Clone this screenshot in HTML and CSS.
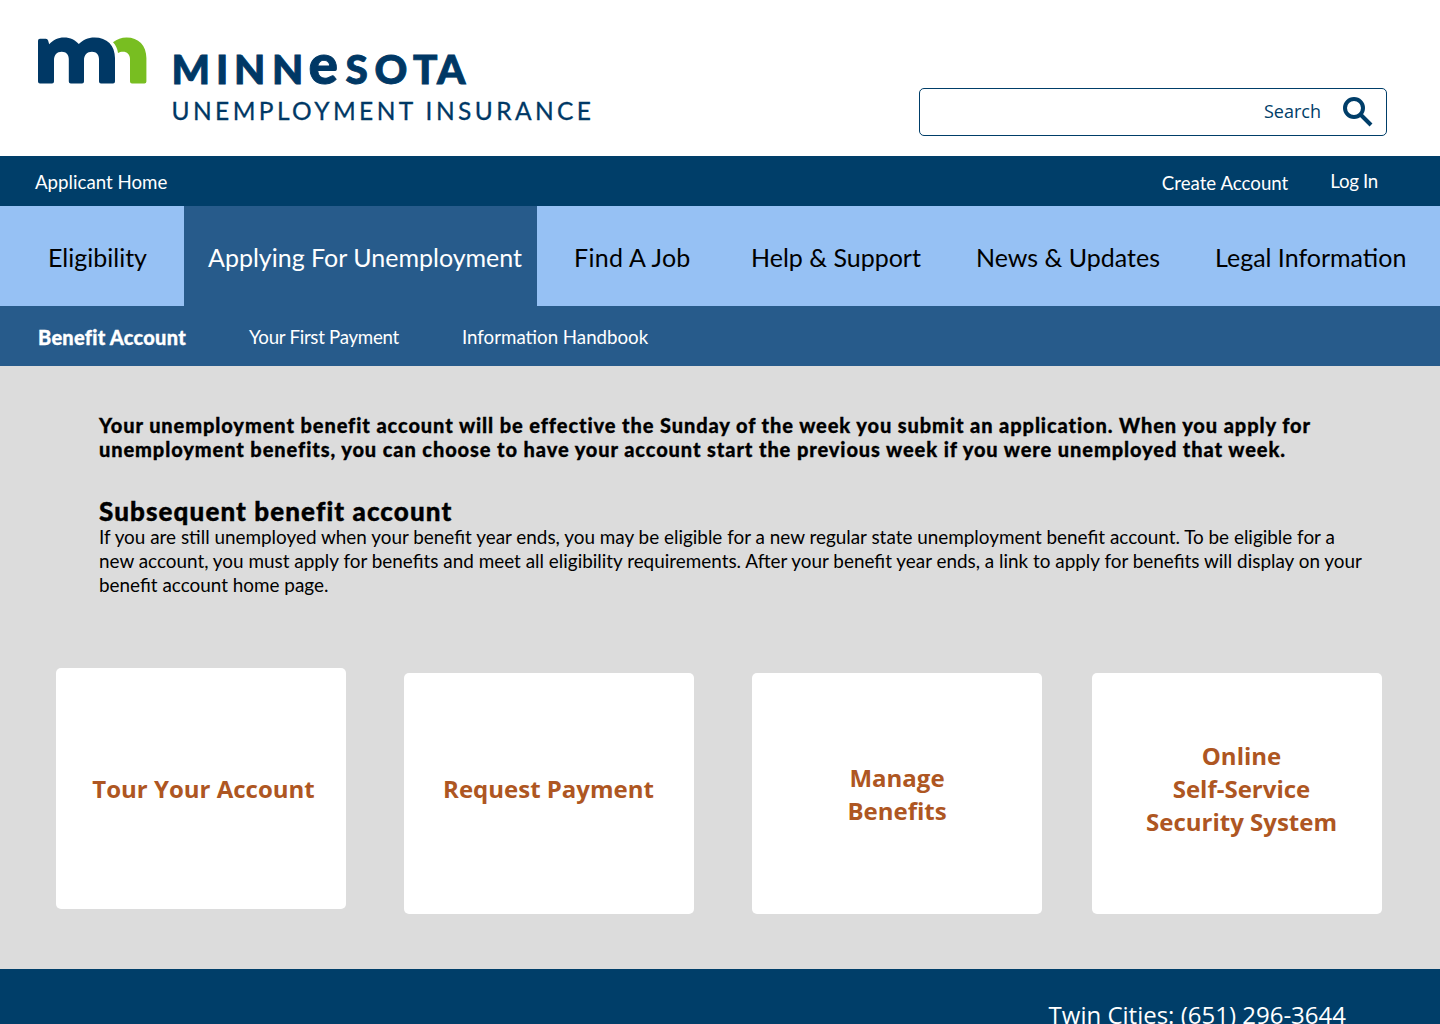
FILE: index.html
```
<!DOCTYPE html>
<html lang="en">
<head>
    <meta charset="UTF-8">
    <meta name="viewport" content="width=device-width, initial-scale=1.0">
    <title>Minnesota Unemployment Insurance</title>
    <link rel="stylesheet" href="styles.css">
</head>
<body>

<!-- Header -->
<header class="header">
    <svg class="logo" width="560" height="92" viewBox="38 36 560 92">
        <path class="logo-blue" d="M40 38.700h5.800q1.800 0 2.300 1.900l1.100 3.600C53 40 58 37.400 64 37.400c6.500 0 11.500 2.600 14.800 6.600C82.500 40 88 37.400 94.500 37.400 107 37.400 115 45.500 115 58v23.500q0 2-2 2h-12q-2 0-2-2V59c0-4.500-2.800-7.300-7-7.300-5 0-8 3.300-8 8.300v21.500q0 2-2 2H70.800q-2 0-2-2V59c0-4.500-2.800-7.300-7-7.300-5 0-7.800 3.300-7.800 8.300v21.500q0 2-2 2H40q-2 0-2-2V40.700q0-2 2-2z"/>
        <path class="logo-green" d="M113 42.200c4-3.100 8.500-4.800 13.500-4.800C138.500 37.400 146.400 45.500 146.400 58v23.500q0 2-2 2h-12.400q-2 0-2-2V59c0-4.700-3-7.300-7-7.300-2 0-3.600.4-5 1.400-.5-4.400-2.200-8-5-10.900z"/>
        <text class="logo-name" y="83.500" x="171.500 216 234 272">MINN</text>
        <text class="logo-name logo-e" y="83.500" x="308.500">e</text>
        <text class="logo-name" y="83.500" x="345.500 374.500 413 437">SOTA</text>
        <text class="logo-sub" x="171.500" y="120" textLength="419.500">UNEMPLOYMENT INSURANCE</text>
    </svg>
    <div class="search">
        <span>Search</span>
        <svg class="search-icon" width="30" height="30" viewBox="0 0 30 30">
            <circle cx="11" cy="11" r="9"/>
            <path d="M17.500 17.500l10.500 10.500"/>
        </svg>
    </div>
</header>

<!-- Account bar -->
<div class="account-bar">
    <a class="home">Applicant Home</a>
    <a class="create">Create Account</a>
    <a class="login">Log In</a>
</div>

<!-- Main menu -->
<nav class="menu">
    <a class="eligibility">Eligibility</a>
    <a class="applying active">Applying For Unemployment</a>
    <a class="job">Find A Job</a>
    <a class="help">Help &amp; Support</a>
    <a class="news">News &amp; Updates</a>
    <a class="legal">Legal Information</a>
</nav>

<!-- Sub menu -->
<nav class="submenu">
    <a class="benefit active">Benefit Account</a>
    <a class="payment">Your First Payment</a>
    <a class="handbook">Information Handbook</a>
</nav>

<main class="content">
    <p class="intro">Your unemployment benefit account will be effective the Sunday of the week you submit an application. When you apply for<br>unemployment benefits, you can choose to have your account start the previous week if you were unemployed that week.</p>
    <h2>Subsequent benefit account</h2>
    <p class="details">If you are still unemployed when your benefit year ends, you may be eligible for a new regular state unemployment benefit account. To be eligible for a<br>new account, you must apply for benefits and meet all eligibility requirements. After your benefit year ends, a link to apply for benefits will display on your<br>benefit account home page.</p>

    <div class="cards">
        <a class="card tour">Tour Your Account</a>
        <a class="card request">Request Payment</a>
        <a class="card manage">Manage<br>Benefits</a>
        <a class="card online">Online<br>Self-Service<br>Security System</a>
    </div>
</main>

<footer class="footer">Twin Cities: (651) 296-3644</footer>

</body>
</html>
```
FILE: styles.css
```
* {
    box-sizing: border-box;
}
body {
    margin: 0;
    height: 1024px;
    overflow: hidden;
    font-family: Lato, sans-serif;
    font-size: 20px;
    color: #000;
    background-color: #dcdcdc;
}
a {
    white-space: nowrap;
}
.header {
    display: flex;
    justify-content: space-between;
    align-items: flex-start;
    height: 156px;
    padding: 36px 53px 0 38px;
    background-color: #fff;
}
.logo {
    overflow: visible;
}
.logo-blue {
    fill: #003865;
}
.logo-green {
    fill: #78be21;
}
.logo-name {
    fill: #003865;
    stroke: #003865;
    stroke-width: 0.9;
    font-size: 40.5px;
    font-weight: 900;
}
.logo-e {
    font-size: 55px;
}
.logo-sub {
    fill: #003865;
    stroke: #003865;
    stroke-width: 0.3;
    font-size: 24.5px;
}
.search {
    display: flex;
    justify-content: flex-end;
    align-items: center;
    width: 468px;
    height: 48px;
    margin-top: 52px;
    padding-right: 13px;
    border: 1px solid #003e69;
    border-radius: 5px;
    font-family: "Open Sans", sans-serif;
    font-size: 18px;
    color: #003e69;
}
.search span {
    padding-bottom: 2px;
}
.search-icon {
    margin-left: 22px;
    fill: none;
    stroke: #003e69;
    stroke-width: 4;
}
.account-bar {
    display: flex;
    height: 50px;
    padding: 14px 62px 0 35px;
    font-size: 18.7px;
    line-height: 24px;
    color: #fff;
    background-color: #003e69;
}
.create {
    margin-left: auto;
    margin-right: 42px;
    padding-top: 1px;
}
.login {
    margin-top: -1px;
    letter-spacing: -0.3px;
}
.menu {
    display: grid;
    grid-template-columns: 184px 353px 178px 225px 239px 261px;
    height: 100px;
    line-height: 102px;
    font-size: 25px;
    background-color: #96c1f4;
}
.eligibility {
    padding-left: 48px;
}
.applying {
    padding-left: 24px;
}
.job {
    padding-left: 37px;
    letter-spacing: 0.3px;
}
.help {
    padding-left: 36px;
}
.news {
    padding-left: 36px;
}
.legal {
    padding-left: 36px;
}
.menu .active {
    color: #fff;
    background-color: #275b8b;
}
.submenu {
    display: grid;
    grid-template-columns: 211px 213px auto;
    height: 60px;
    padding-left: 38px;
    font-size: 18.7px;
    line-height: 62px;
    color: #fff;
    background-color: #275b8b;
}
.submenu .active {
    font-size: 20px;
    font-weight: 900;
    letter-spacing: 0.25px;
    -webkit-text-stroke: 0.3px;
}
.payment {
    letter-spacing: -0.28px;
}
.content {
    height: 603px;
    padding: 47px 0 0 99px;
    white-space: nowrap;
}
.content p {
    margin: 0;
    line-height: 24px;
}
.content .intro {
    font-weight: 900;
    letter-spacing: 0.9px;
    -webkit-text-stroke: 0.3px;
}
.content .details {
    font-size: 18.9px;
}
.content h2 {
    margin: 36px 0 0;
    font-size: 26px;
    font-weight: 900;
    line-height: 28px;
    letter-spacing: 1.1px;
    -webkit-text-stroke: 0.4px;
}
.cards {
    display: grid;
    grid-template-columns: 290px 290px 290px 290px;
    column-gap: 58px;
    margin: 76px 0 0 -43px;
}
.card {
    display: flex;
    justify-content: center;
    align-items: center;
    height: 241px;
    border-radius: 5px;
    background-color: #fff;
    font-family: "Open Sans", sans-serif;
    font-size: 24px;
    font-weight: 700;
    line-height: 33px;
    text-align: center;
    color: #ae5622;
}
.tour {
    margin-top: -5px;
    padding-left: 5px;
}
.request {
    padding: 0 1px 10px 0;
}
.manage {
    padding-top: 0;
}
.online {
    margin-left: -8px;
    margin-right: 8px;
    padding: 0 0 10px 9px;
}
.footer {
    height: 55px;
    padding: 29px 94px 0 0;
    text-align: right;
    font-family: "Open Sans", sans-serif;
    font-size: 24px;
    line-height: 33px;
    color: #fff;
    background-color: #003e69;
}
```
